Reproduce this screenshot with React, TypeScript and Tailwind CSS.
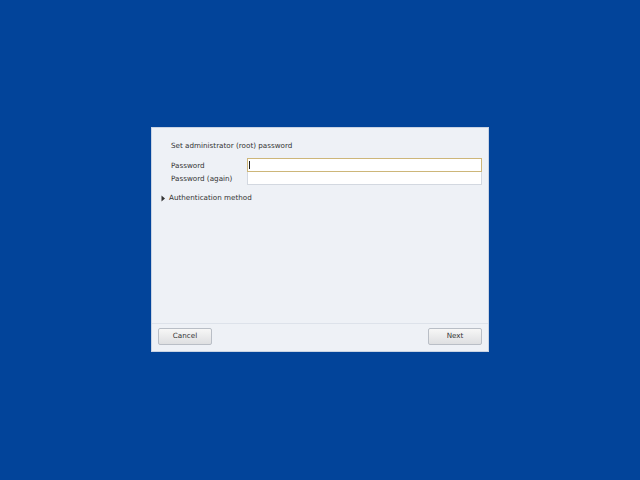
export default function App() {
  return (
    <div
      className="w-[640px] h-[480px] bg-[#02449a] flex items-start justify-center pt-[127px]"
      style={{ fontFamily: '"DejaVu Sans", sans-serif' }}
    >
      <div className="w-[338px] h-[225px] bg-[#eef1f6] border border-[#c9d3e3] flex flex-col text-[7.2px] text-[#333]">
        <div className="flex-1 flex flex-col pl-[19px] pr-[6px] pt-[13px]">
          <div className="leading-[10px]">Set administrator (root) password</div>
          <div className="mt-[7px] grid grid-cols-[76px_1fr] items-center">
            <div className="leading-[13px]">Password</div>
            <div className="h-[14px] bg-white border border-[#cdb679] flex items-center pl-[1px]">
              <div className="w-px h-[8px] bg-[#222]" />
            </div>
            <div className="leading-[13px]">Password (again)</div>
            <div className="h-[13px] bg-white border border-[#d3d8e0] border-t-0" />
          </div>
          <div className="mt-[8px] -ml-[10px] flex items-center gap-[3px] leading-[10px]">
            <svg width="5" height="7" viewBox="0 0 5 7">
              <path d="M0.5 0.5 L4 3.5 L0.5 6.5 Z" fill="#333" />
            </svg>
            <span>Authentication method</span>
          </div>
        </div>
        <div className="border-t border-[#dde2ea] h-[28px] flex items-start pt-[4px] justify-between px-[6px]">
          <button className="w-[54px] h-[17px] rounded-[2px] border border-[#b9bec6] bg-gradient-to-b from-[#f7f7f7] to-[#dedfe1] text-[7.2px] text-[#333]">
            Cancel
          </button>
          <button className="w-[54px] h-[17px] rounded-[2px] border border-[#b9bec6] bg-gradient-to-b from-[#f7f7f7] to-[#dedfe1] text-[7.2px] text-[#333]">
            Next
          </button>
        </div>
      </div>
    </div>
  );
}
